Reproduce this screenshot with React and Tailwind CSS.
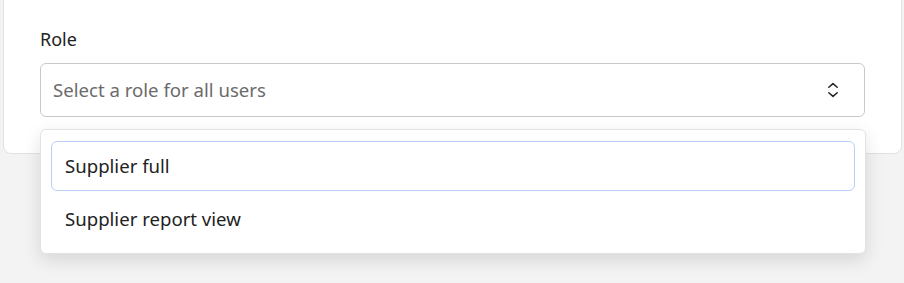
export default function App() {
  return (
    <div className="relative h-[283px] w-[904px] overflow-hidden bg-[#f3f3f3]" style={{ fontFamily: "'Noto Sans', 'Open Sans', sans-serif" }}>
      <div className="ml-[3px] mr-[2px] -mt-[10px] rounded-lg border border-[#e2e2e2] bg-white px-[36px] pt-[34px] pb-[36px]">
        <div className="h-[28px] text-[18px] leading-[28px] text-[#222]">Role</div>
        <div className="mt-[10px] flex h-[54px] items-center justify-between rounded-md border border-[#c9c9c9] bg-white pl-[12px] pr-[25px]">
          <span className="text-[18.6px] text-[#6b6b6b]">Select a role for all users</span>
          <svg width="12" height="16" viewBox="0 0 12 16" fill="none">
            <path d="M1.8 5.2 L6 1.6 L10.2 5.2" stroke="#222" strokeWidth="1.5" strokeLinecap="round" strokeLinejoin="round" />
            <path d="M1.8 10.8 L6 14.4 L10.2 10.8" stroke="#222" strokeWidth="1.5" strokeLinecap="round" strokeLinejoin="round" />
          </svg>
        </div>
      </div>
      <div className="absolute left-[40px] top-[129px] w-[826px] rounded-md border border-[#e3e3e3] bg-white px-[10px] pt-[11px] pb-[9px] shadow-[0_6px_18px_rgba(0,0,0,0.12)]">
        <div className="flex h-[50px] items-center rounded-md border border-[#b8cffa] px-[13px] text-[18.6px] text-[#222]">Supplier full</div>
        <div className="mt-[3px] flex h-[50px] items-center px-[14px] text-[18.6px] text-[#222]">Supplier report view</div>
      </div>
    </div>
  );
}
